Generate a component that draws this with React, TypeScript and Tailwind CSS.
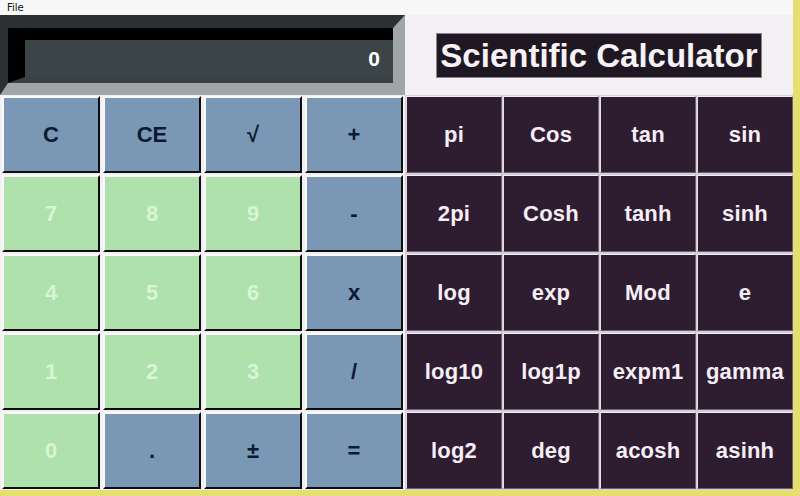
import React from "react";

const leftRows: { t: string; k: "b" | "g" }[][] = [
  [{ t: "C", k: "b" }, { t: "CE", k: "b" }, { t: "√", k: "b" }, { t: "+", k: "b" }],
  [{ t: "7", k: "g" }, { t: "8", k: "g" }, { t: "9", k: "g" }, { t: "-", k: "b" }],
  [{ t: "4", k: "g" }, { t: "5", k: "g" }, { t: "6", k: "g" }, { t: "x", k: "b" }],
  [{ t: "1", k: "g" }, { t: "2", k: "g" }, { t: "3", k: "g" }, { t: "/", k: "b" }],
  [{ t: "0", k: "g" }, { t: ".", k: "b" }, { t: "±", k: "b" }, { t: "=", k: "b" }],
];

const rightKeys = [
  "pi", "Cos", "tan", "sin",
  "2pi", "Cosh", "tanh", "sinh",
  "log", "exp", "Mod", "e",
  "log10", "log1p", "expm1", "gamma",
  "log2", "deg", "acosh", "asinh",
];

export default function App() {
  return (
    <div
      className="w-[800px] h-[496px] bg-[#e4df6e] overflow-hidden"
      style={{ fontFamily: '"Liberation Sans", Arial, sans-serif' }}
    >
      <div className="w-[793px] h-[490px] bg-[#f2f0f2] flex flex-col">
        {/* menu */}
        <div className="h-[15px] flex items-center pl-[7px] bg-[#f7f7f7]">
          <span
            className="text-[10px] leading-none text-[#111]"
            style={{ fontFamily: '"DejaVu Sans", "Noto Sans", sans-serif' }}
          >
            File
          </span>
        </div>

        {/* top row */}
        <div className="h-[80px] flex">
          <div className="w-[405px] h-[80px] border-t-[13px] border-l-[8px] border-r-[12px] border-b-[12px] border-t-[#2c3033] border-l-[#2c3033] border-r-[#a0a5a8] border-b-[#a0a5a8]">
            <div className="h-full border-t-[12px] border-l-[17px] border-b-[6px] border-t-black border-l-black border-b-[#3a4245] bg-[#3b4447] flex items-center justify-end pr-[13px]">
              <span className="text-white font-bold text-[21px] leading-none">0</span>
            </div>
          </div>
          <div className="flex-1 flex items-center justify-center">
            <div className="h-[45px] bg-[#1f1823] border border-[#8a8490] flex items-center px-[3px]">
              <span className="text-[#f6f2f6] font-bold text-[33px] leading-none">
                Scientific Calculator
              </span>
            </div>
          </div>
        </div>

        {/* keys */}
        <div className="flex h-[395px]">
          <div className="w-[405px] grid grid-cols-4 grid-rows-5 gap-x-[3px] gap-y-[2px] px-[2px] py-[1px]">
            {leftRows.flat().map((k, i) => (
              <div
                key={i}
                className={
                  "border-2 border-t-[#fafafa] border-l-[#fafafa] border-b-[#0e0e0e] border-r-[#0e0e0e] flex items-center justify-center font-bold text-[22px] leading-none " +
                  (k.k === "g"
                    ? "bg-[#aee1ab] text-[#d8f5d5]"
                    : "bg-[#7a97b6] text-[#0c1a31]")
                }
              >
                {k.t}
              </div>
            ))}
          </div>
          <div className="w-[388px] grid grid-cols-4 grid-rows-5 gap-x-[1px] gap-y-[2px] pl-[1px] py-[1px] bg-[#d6cfd9]">
            {rightKeys.map((t) => (
              <div
                key={t}
                className="border border-t-[#f4eef6] border-l-[#e6dfe9] border-b-[#6d6274] border-r-[#6d6274] bg-[#2e1c31] flex items-center justify-center text-[#f5eff5] font-bold text-[22px] leading-none tracking-[0.2px]"
              >
                {t}
              </div>
            ))}
          </div>
        </div>
      </div>
    </div>
  );
}
